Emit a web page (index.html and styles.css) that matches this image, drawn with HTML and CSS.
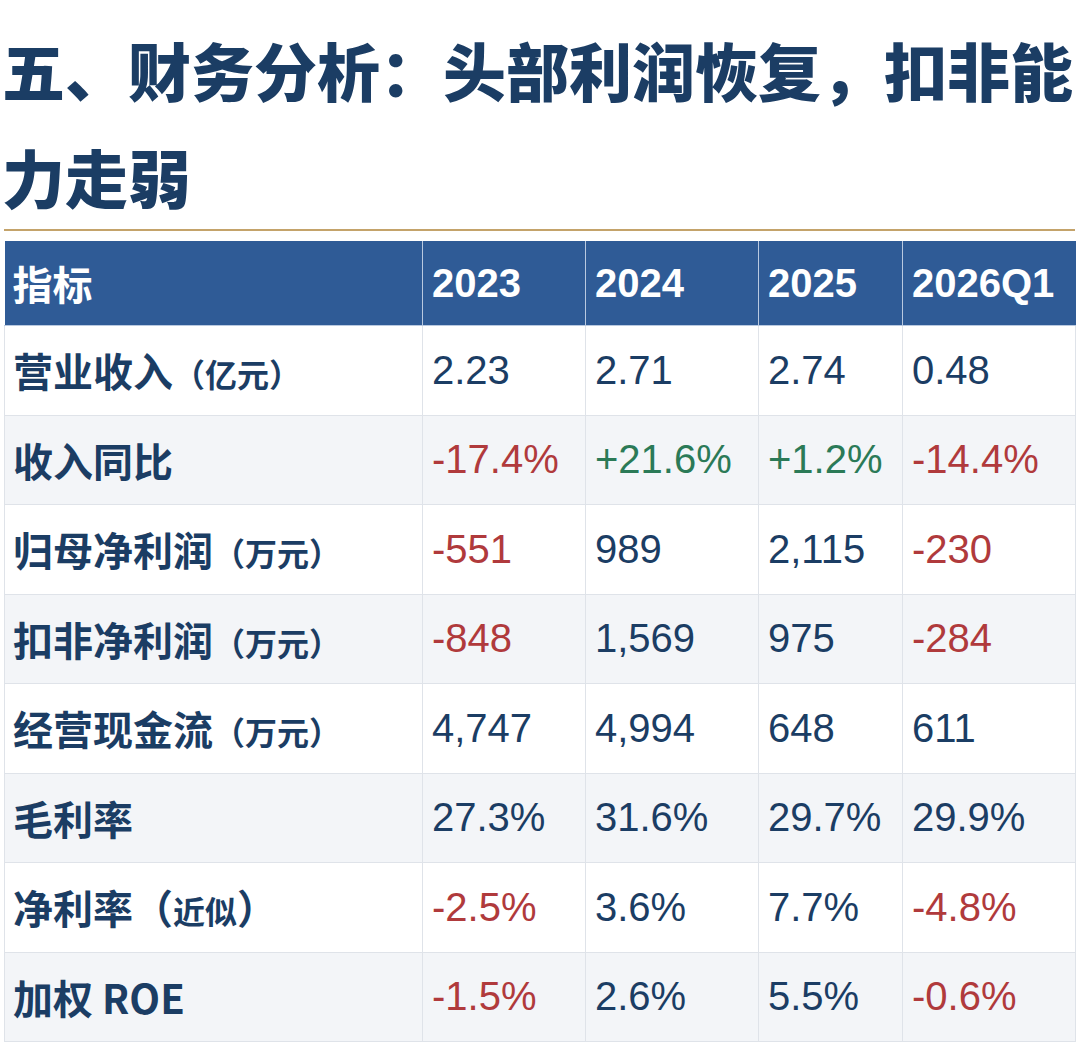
FILE: index.html
```html
<!DOCTYPE html>
<html lang="zh">
<head>
<meta charset="utf-8">
<link rel="stylesheet" href="styles.css">
</head>
<body>
<h1 class="title">五、财务分析：头部利润恢复，扣非能力走弱</h1>
<div class="rule"></div>
<table class="fin">
  <colgroup>
    <col class="c0"><col class="c1"><col class="c2"><col class="c3"><col class="c4">
  </colgroup>
  <thead>
    <tr><th>指标</th><th>2023</th><th>2024</th><th>2025</th><th>2026Q1</th></tr>
  </thead>
  <tbody>
    <tr><td class="lbl">营业收入<span class="unit">（亿元）</span></td><td>2.23</td><td>2.71</td><td>2.74</td><td>0.48</td></tr>
    <tr class="alt"><td class="lbl">收入同比</td><td class="neg">-17.4%</td><td class="pos">+21.6%</td><td class="pos">+1.2%</td><td class="neg">-14.4%</td></tr>
    <tr><td class="lbl">归母净利润<span class="unit">（万元）</span></td><td class="neg">-551</td><td>989</td><td>2,115</td><td class="neg">-230</td></tr>
    <tr class="alt"><td class="lbl">扣非净利润<span class="unit">（万元）</span></td><td class="neg">-848</td><td>1,569</td><td>975</td><td class="neg">-284</td></tr>
    <tr><td class="lbl">经营现金流<span class="unit">（万元）</span></td><td>4,747</td><td>4,994</td><td>648</td><td>611</td></tr>
    <tr class="alt"><td class="lbl">毛利率</td><td>27.3%</td><td>31.6%</td><td>29.7%</td><td>29.9%</td></tr>
    <tr><td class="lbl">净利率（<span class="unit">近似</span>）</td><td class="neg">-2.5%</td><td>3.6%</td><td>7.7%</td><td class="neg">-4.8%</td></tr>
    <tr class="alt"><td class="lbl">加权 ROE</td><td class="neg">-1.5%</td><td>2.6%</td><td>5.5%</td><td class="neg">-0.6%</td></tr>
  </tbody>
</table>
</body>
</html>
```

FILE: styles.css
```css
html, body {
  margin: 0;
  padding: 0;
  background: #ffffff;
}
body {
  font-family: "Noto Sans CJK SC", "Liberation Sans", sans-serif;
  color: #1b3d64;
}
.title {
  margin: 0;
  padding: 15px 0 0 2px;
  font-size: 63px;
  line-height: 107px;
  font-weight: 900;
  color: #1b3d64;
  letter-spacing: 0;
}
.rule {
  height: 2px;
  background: #c4a36a;
  margin: 0 5px 0 4px;
}
.fin {
  margin: 10px 0 0 4px;
  width: 1071px;
  border-collapse: collapse;
  table-layout: fixed;
}
.c0 { width: 418px; }
.c1 { width: 163px; }
.c2 { width: 173px; }
.c3 { width: 144px; }
.c4 { width: 173px; }
.fin th {
  background: #2f5b96;
  color: #ffffff;
  font-family: "Liberation Sans", "Noto Sans CJK SC", sans-serif;
  font-weight: 700;
  font-size: 40px;
  text-align: left;
  height: 84px;
  padding: 0 0 0 9px;
  border-left: 1px solid #b9c9e0;
  border-bottom: 1px solid #b9c9e0;
  vertical-align: middle;
}
.fin th:first-child {
  font-family: "Noto Sans CJK SC", sans-serif;
  border-left: none;
  padding-left: 8px;
}
.fin td {
  font-family: "Liberation Sans", "Noto Sans CJK SC", sans-serif;
  font-size: 40px;
  color: #1b3d64;
  height: 89.5px;
  padding: 0 0 0 9px;
  border: 1px solid #dfe3e9;
  vertical-align: middle;
  white-space: nowrap;
  box-sizing: border-box;
}
.fin tr.alt td {
  background: #f3f5f8;
}
.fin td.lbl {
  font-family: "Noto Sans CJK SC", sans-serif;
  font-weight: 700;
  font-size: 40px;
  padding-left: 8px;
}
.unit {
  font-size: 32px;
}
.neg { color: #b03a3c !important; }
.pos { color: #2b7a57 !important; }
```
